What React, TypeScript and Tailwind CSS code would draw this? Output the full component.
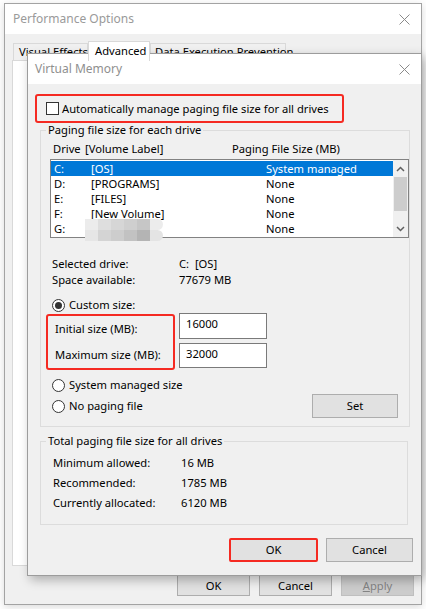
import React from 'react'

const font = "font-['Noto_Sans','Liberation_Sans',sans-serif]"

function CloseIcon() {
  return (
    <svg width="11" height="11" viewBox="0 0 11 11" className="block">
      <path d="M0.5 0.5 L10.5 10.5 M10.5 0.5 L0.5 10.5" stroke="#8a8a8a" strokeWidth="1" fill="none" />
    </svg>
  )
}

function Radio({ checked }: { checked?: boolean }) {
  return (
    <span className="flex h-[13px] w-[13px] shrink-0 items-center justify-center rounded-full border border-[#333] bg-white">
      {checked && <span className="h-[7px] w-[7px] rounded-full bg-[#333]" />}
    </span>
  )
}

function Button({ label, className = '' }: { label: React.ReactNode; className?: string }) {
  return (
    <div className={`flex items-center justify-center border border-[#adadad] bg-[#e1e1e1] text-black ${className}`}>
      {label}
    </div>
  )
}

const drives = [
  { d: 'C:', label: '[OS]', size: 'System managed' },
  { d: 'D:', label: '[PROGRAMS]', size: 'None' },
  { d: 'E:', label: '[FILES]', size: 'None' },
  { d: 'F:', label: '[New Volume]', size: 'None' },
  { d: 'G:', label: '', size: 'None' },
]

const blur = [
  ['#ececec', '#dedede', '#d6d6d6', '#cfcfcf', '#c6c6c6', '#ececec'],
  ['#e6e6e6', '#d4d4d4', '#cdcdcd', '#c2c2c2', '#b4b4b4', '#e4e4e4'],
]

function DriveList() {
  return (
    <div className="relative mt-[3px] flex h-[79px] w-[359px] border border-[#828282] bg-white">
      <div className="flex-1 pt-[1px]">
        {drives.map((r, i) => (
          <div
            key={r.d}
            className={`flex h-[15px] items-center pl-[3px] leading-none ${i === 0 ? 'bg-[#0078d7] text-white' : 'text-black'}`}
          >
            <span className="w-[37px]">{r.d}</span>
            <span className="w-[175px]">{r.label}</span>
            <span>{r.size}</span>
          </div>
        ))}
      </div>
      <div className="flex w-[15px] flex-col bg-[#f0f0f0]">
        <div className="flex h-[17px] items-center justify-center">
          <svg width="9" height="6" viewBox="0 0 9 6">
            <path d="M1 5 L4.5 1.5 L8 5" stroke="#606060" strokeWidth="1.5" fill="none" />
          </svg>
        </div>
        <div className="mx-[1px] h-[34px] bg-[#cdcdcd]" />
        <div className="flex-1" />
        <div className="flex h-[17px] items-center justify-center">
          <svg width="9" height="6" viewBox="0 0 9 6">
            <path d="M1 1 L4.5 4.5 L8 1" stroke="#606060" strokeWidth="1.5" fill="none" />
          </svg>
        </div>
      </div>
      {/* blurred volume label */}
      <div className="absolute left-[34px] top-[59px] flex flex-col">
        {blur.map((row, ri) => (
          <div key={ri} className="flex">
            {row.map((c, ci) => (
              <div key={ci} className={`h-[11px] w-[13px] ${ci === 5 ? 'rounded-r-full' : ''}`} style={{ background: c }} />
            ))}
          </div>
        ))}
      </div>
    </div>
  )
}

function PerformanceOptions() {
  return (
    <div className="absolute left-[4px] top-[3px] flex h-[602px] w-[418px] flex-col border border-[#a3a3a3] bg-[#f0f0f0] shadow-[0_2px_8px_rgba(0,0,0,0.15)]">
      <div className="flex h-[30px] items-center justify-between bg-white pl-[8px] pr-[11px] text-[12px] text-[#9a9a9a]">
        <span>Performance Options</span>
        <CloseIcon />
      </div>
      <div className="flex flex-1 flex-col px-[7px] pt-[7px]">
        <div className="flex h-[19px] items-end pl-[1px]">
          <div className="flex h-[17px] w-[75px] items-center border border-b-0 border-[#d9d9d9] bg-[#f0f0f0] pl-[5px]">Visual Effects</div>
          <div className="relative z-10 -mb-[1px] flex h-[20px] w-[62px] items-start border border-b-0 border-[#d9d9d9] bg-white pl-[6px] pt-[1px]">Advanced</div>
          <div className="flex h-[17px] w-[136px] items-center border border-b-0 border-[#d9d9d9] bg-[#f0f0f0] pl-[4px]">Data Execution Prevention</div>
        </div>
        <div className="h-[506px] border border-[#d9d9d9] bg-white" />
        <div className="mt-[9px] flex justify-end gap-[9px]">
          <Button label="OK" className="h-[21px] w-[73px]" />
          <Button label="Cancel" className="h-[21px] w-[73px]" />
          <div className="flex h-[21px] w-[73px] items-center justify-center border border-[#bfbfbf] bg-[#cccccc] text-[#838383]">
            <span><span className="underline">A</span>pply</span>
          </div>
        </div>
      </div>
    </div>
  )
}

function VirtualMemory() {
  return (
    <div className="absolute left-[27px] top-[53px] flex h-[523px] w-[395px] flex-col border border-[#9c9c9c] bg-[#f0f0f0] shadow-[3px_4px_10px_rgba(0,0,0,0.28)]">
      <div className="flex h-[30px] shrink-0 items-center justify-between bg-white pl-[7px] pr-[11px] text-[12px] text-[#8f8f8f]">
        <span>Virtual Memory</span>
        <CloseIcon />
      </div>

      <div className="ml-[7px] mt-[10px] flex h-[29px] w-[309px] items-center rounded-[3px] border-2 border-[#f52a22] pl-[9px]">
        <span className="h-[13px] w-[13px] border border-[#333] bg-white" />
        <span className="ml-[3px]">Automatically manage paging file size for all drives</span>
      </div>

      <fieldset className="ml-[12px] w-[368px] border border-[#dcdcdc] pb-[8px] pl-[9px]">
        <legend className="-ml-[4px] px-[2px] leading-[14px]">Paging file size for each drive</legend>
        <div className="mt-[4px] flex h-[15px] items-center pl-[3px] leading-none">
          <span className="w-[32px]">Drive</span>
          <span className="w-[147px]">[Volume Label]</span>
          <span>Paging File Size (MB)</span>
        </div>
        <DriveList />

        <div className="mt-[18px] flex h-[16px] items-center pl-[2px]">
          <span className="w-[127px]">Selected drive:</span>
          <span>C:&nbsp;&nbsp;[OS]</span>
        </div>
        <div className="flex h-[16px] items-center pl-[2px]">
          <span className="w-[127px]">Space available:</span>
          <span>77679 MB</span>
        </div>

        <div className="ml-[2px] mt-[9px] flex h-[16px] items-center gap-[4px]">
          <Radio checked />
          <span>Custom size:</span>
        </div>

        <div className="-ml-[4px] flex items-start">
          <div className="mt-[1px] flex h-[56px] w-[129px] flex-col justify-around rounded-[3px] border-2 border-[#f52a22] pl-[7px]">
            <span>Initial size (MB):</span>
            <span>Maximum size (MB):</span>
          </div>
          <div className="ml-[4px] flex flex-col gap-[4px]">
            <div className="flex h-[26px] w-[88px] items-start border border-[#7a7a7a] bg-white pl-[6px] pt-[2px]">16000</div>
            <div className="flex h-[25px] w-[88px] items-start border border-[#7a7a7a] bg-white pl-[6px] pt-[2px]">32000</div>
          </div>
        </div>

        <div className="ml-[2px] mt-[7px] flex h-[16px] items-center gap-[4px]">
          <Radio />
          <span>System managed size</span>
        </div>
        <div className="ml-[2px] mt-[1px] flex h-[24px] items-center pr-[11px]">
          <Radio />
          <span className="ml-[4px] flex-1">No paging file</span>
          <Button label="Set" className="h-[24px] w-[86px]" />
        </div>
      </fieldset>

      <fieldset className="ml-[12px] mt-[7px] w-[368px] border border-[#dcdcdc] pb-[11px] pl-[12px]">
        <legend className="-ml-[7px] px-[2px] leading-[14px]">Total paging file size for all drives</legend>
        <div className="mt-[5px] flex h-[20px] items-center">
          <span className="w-[128px]">Minimum allowed:</span>
          <span>16 MB</span>
        </div>
        <div className="flex h-[20px] items-center">
          <span className="w-[128px]">Recommended:</span>
          <span>1785 MB</span>
        </div>
        <div className="flex h-[20px] items-center">
          <span className="w-[128px]">Currently allocated:</span>
          <span>6120 MB</span>
        </div>
      </fieldset>

      <div className="mt-[13px] flex justify-end gap-[8px] pr-[8px]">
        <div className="flex h-[24px] w-[89px] rounded-[2px] border-2 border-[#f52a22]">
          <div className="flex flex-1 items-center justify-center bg-[#e1e1e1]">OK</div>
        </div>
        <Button label="Cancel" className="h-[24px] w-[87px]" />
      </div>
    </div>
  )
}

export default function App() {
  return (
    <div className={`relative h-[609px] w-[426px] overflow-hidden whitespace-nowrap bg-white text-[11.2px] leading-[16px] text-black ${font}`}>
      <PerformanceOptions />
      <VirtualMemory />
    </div>
  )
}
